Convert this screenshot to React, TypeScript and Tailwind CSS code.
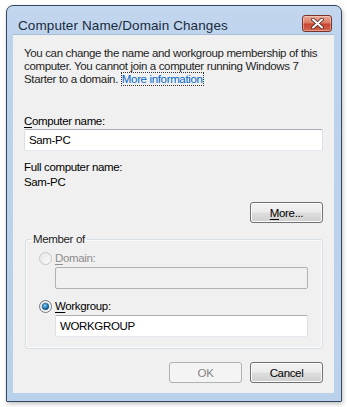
import React from "react";

function Radio({ checked, disabled }: { checked?: boolean; disabled?: boolean }) {
  return (
    <svg width="13" height="13" viewBox="0 0 13 13" className="shrink-0">
      <defs>
        <linearGradient id={checked ? "rb-on" : "rb-off"} x1="0" y1="0" x2="1" y2="1">
          <stop offset="0" stopColor={disabled ? "#e6e6e6" : "#e0e0e0"} />
          <stop offset="1" stopColor={disabled ? "#fbfbfb" : "#ffffff"} />
        </linearGradient>
        <radialGradient id="rb-dot" cx="0.4" cy="0.35" r="0.7">
          <stop offset="0" stopColor="#8fd2f5" />
          <stop offset="0.5" stopColor="#2a8bc9" />
          <stop offset="1" stopColor="#0b3f6e" />
        </radialGradient>
      </defs>
      <circle cx="6.5" cy="6.5" r="6" fill={`url(#${checked ? "rb-on" : "rb-off"})`} stroke={disabled ? "#c4c4c4" : "#6f7a84"} strokeWidth="1" />
      {checked && <circle cx="6.5" cy="6.5" r="3.3" fill="url(#rb-dot)" stroke="#1b4b74" strokeWidth="0.6" />}
    </svg>
  );
}

function TextBox({ value, disabled, className = "" }: { value?: string; disabled?: boolean; className?: string }) {
  return (
    <div
      className={`h-[22px] flex items-center px-[4px] border rounded-[2px] ${
        disabled ? "bg-[#f0f0f0] border-[#adb2b5]" : "bg-white border-t-[#abadb3] border-x-[#dbdfe6] border-b-[#e3e9ef]"
      } ${className}`}
    >
      {value}
    </div>
  );
}

function Button({ children, disabled }: { children: React.ReactNode; disabled?: boolean }) {
  return (
    <div
      className={`w-[73px] h-[21px] flex items-center justify-center rounded-[3px] border ${
        disabled
          ? "border-[#adb2b5] bg-[#f4f4f4] text-[#838383]"
          : "border-[#707070] bg-[linear-gradient(#f2f2f2_0%,#ebebeb_48%,#dddddd_52%,#cfcfcf_100%)] text-black shadow-[inset_0_0_0_1px_#fcfcfc]"
      }`}
    >
      {children}
    </div>
  );
}

export default function App() {
  return (
    <div
      className="w-[347px] h-[407px] bg-white pl-[6px] pt-[5px] text-[11.5px] tracking-[-0.35px] leading-[14px] text-black"
      style={{ fontFamily: '"Liberation Sans", Arial, sans-serif' }}
    >
      <div className="w-[336px] h-[397px] flex flex-col border border-[#33475e] rounded-t-[7px] rounded-b-[1px] bg-[linear-gradient(#c3d7ee,#bcd3ec_40px,#b9d1ea)] shadow-[1px_2px_4px_rgba(0,0,0,0.25)]">
        <div className="h-[28px] flex items-start justify-between pl-[11px] pr-[9px]">
          <span className="mt-[12px] text-[13.5px] tracking-[0.1px] leading-[15px] text-[#1b2a3c]">Computer Name/Domain Changes</span>
          <div className="mt-[9px] w-[30px] h-[17px] rounded-[3px] border border-[#7a3328] bg-[linear-gradient(#eba896_0%,#dc7a64_48%,#c7452e_52%,#d56450_100%)] flex items-center justify-center shadow-[inset_0_0_0_1px_rgba(255,255,255,0.35)]">
            <svg width="13" height="11" viewBox="0 0 13 11">
              <path d="M2 1.5 L11 9.5 M11 1.5 L2 9.5" stroke="#4b2018" strokeWidth="3.6" strokeLinecap="round" />
              <path d="M2 1.5 L11 9.5 M11 1.5 L2 9.5" stroke="#ffffff" strokeWidth="2" strokeLinecap="round" />
            </svg>
          </div>
        </div>

        <div className="ml-[6px] mr-[7px] mb-[8px] flex-1 bg-[#f0f0f0] border-t border-[#a9bdd6] px-[11px] pt-[12px] flex flex-col">
          <p className="leading-[13px] text-[#1e1e1e] whitespace-nowrap">
            You can change the name and workgroup membership of this
            <br />
            computer. You cannot join a computer running Windows 7
            <br />
            Starter to a domain.{" "}
            <span className="text-[#0066cc] outline-1 outline-dotted outline-[#333] ml-[1px]">More information</span>
          </p>

          <div className="mt-[28px]">
            <span className="underline underline-offset-2">C</span>omputer name:
          </div>
          <TextBox value="Sam-PC" className="mt-[1px]" />

          <div className="mt-[9px]">Full computer name:</div>
          <div className="mt-[1px]">Sam-PC</div>

          <div className="mt-[13px] self-end">
            <Button>
              <span className="underline underline-offset-2">M</span>ore...
            </Button>
          </div>

          <fieldset className="mt-[9px] ml-[1px] h-[117px] p-0 border border-[#d5dfe5] rounded-[3px] shadow-[inset_0_0_0_1px_#fbfbfb]">
            <legend className="ml-[5px] px-[2px] text-[#1e1e1e]">Member of</legend>
            <div className="pl-[13px] pr-[14px]">
              <div className="mt-[5px] flex items-center gap-[3px] text-[#8d8d8d]">
                <Radio disabled />
                <span>
                  <span className="underline underline-offset-2">D</span>omain:
                </span>
              </div>
              <TextBox disabled className="mt-[2px] ml-[16px]" />
              <div className="mt-[10px] flex items-center gap-[3px]">
                <Radio checked />
                <span>
                  <span className="underline underline-offset-2">W</span>orkgroup:
                </span>
              </div>
              <TextBox value="WORKGROUP" className="mt-[2px] ml-[16px]" />
            </div>
          </fieldset>

          <div className="mt-[13px] self-end flex gap-[8px]">
            <Button disabled>OK</Button>
            <Button>Cancel</Button>
          </div>
        </div>
      </div>
    </div>
  );
}
